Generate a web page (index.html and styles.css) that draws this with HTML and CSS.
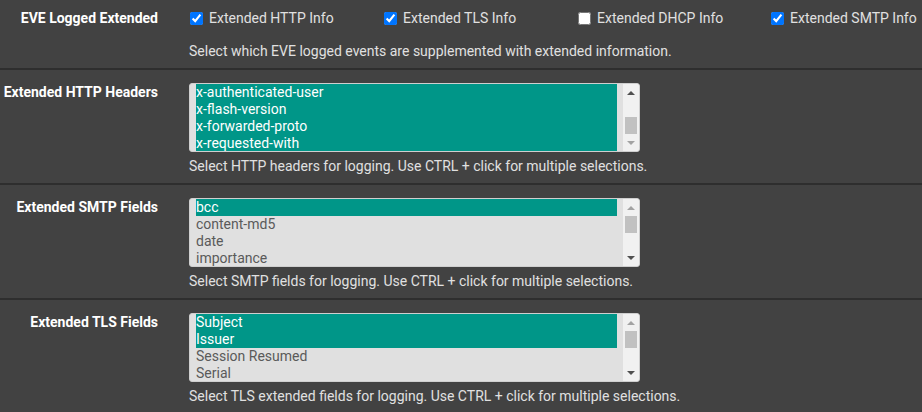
FILE: index.html
```html
<!DOCTYPE html>
<html lang="en">
<head>
    <meta charset="UTF-8">
    <meta name="viewport" content="width=device-width, initial-scale=1.0">
    <title>EVE Logging</title>
    <link rel="stylesheet" href="styles.css">
</head>
<body>
    <div class="panel">
        <div class="row row-checks">
            <div class="label">EVE Logged Extended</div>
            <div class="field">
                <div class="checks">
                    <label class="check"><input type="checkbox" checked> Extended HTTP Info</label>
                    <label class="check"><input type="checkbox" checked> Extended TLS Info</label>
                    <label class="check"><input type="checkbox"> Extended DHCP Info</label>
                    <label class="check"><input type="checkbox" checked> Extended SMTP Info</label>
                </div>
                <p class="help help-checks">Select which EVE logged events are supplemented with extended information.</p>
            </div>
        </div>

        <div class="row">
            <div class="label">Extended HTTP Headers</div>
            <div class="field">
                <div class="listbox">
                    <ul class="options">
                        <li class="selected">x-authenticated-user</li>
                        <li class="selected">x-flash-version</li>
                        <li class="selected">x-forwarded-proto</li>
                        <li class="selected">x-requested-with</li>
                    </ul>
                    <div class="scrollbar at-bottom">
                        <span class="arrow up"></span>
                        <div class="track"><span class="thumb"></span></div>
                        <span class="arrow down"></span>
                    </div>
                </div>
                <p class="help">Select HTTP headers for logging. Use CTRL + click for multiple selections.</p>
            </div>
        </div>

        <div class="row">
            <div class="label">Extended SMTP Fields</div>
            <div class="field">
                <div class="listbox">
                    <ul class="options">
                        <li class="selected">bcc</li>
                        <li>content-md5</li>
                        <li>date</li>
                        <li>importance</li>
                    </ul>
                    <div class="scrollbar at-top">
                        <span class="arrow up"></span>
                        <div class="track"><span class="thumb"></span></div>
                        <span class="arrow down"></span>
                    </div>
                </div>
                <p class="help">Select SMTP fields for logging. Use CTRL + click for multiple selections.</p>
            </div>
        </div>

        <div class="row">
            <div class="label">Extended TLS Fields</div>
            <div class="field">
                <div class="listbox">
                    <ul class="options">
                        <li class="selected">Subject</li>
                        <li class="selected">Issuer</li>
                        <li>Session Resumed</li>
                        <li>Serial</li>
                    </ul>
                    <div class="scrollbar at-top">
                        <span class="arrow up"></span>
                        <div class="track"><span class="thumb"></span></div>
                        <span class="arrow down"></span>
                    </div>
                </div>
                <p class="help">Select TLS extended fields for logging. Use CTRL + click for multiple selections.</p>
            </div>
        </div>
    </div>
</body>
</html>
```

FILE: styles.css
```css
:root {
    --bg: #424242;
    --divider: #2e2e2e;
    --text: #e0e0e0;
    --white: #ffffff;
    --teal: #009688;
    --list-bg: #e0e0e0;
    --list-text: #5a5a5a;
}

* {
    margin: 0;
    padding: 0;
    box-sizing: border-box;
}

body {
    background: var(--bg);
    color: var(--text);
    font-family: Roboto, "Liberation Sans", sans-serif;
    font-size: 14px;
    line-height: 17px;
}

.row {
    display: flex;
    padding: 13px 0 8px;
    border-bottom: 2px solid var(--divider);
}

.row:last-child {
    border-bottom: none;
}

.row-checks {
    padding: 8px 0 8px;
}

.label {
    width: 158px;
    flex-shrink: 0;
    text-align: right;
    font-weight: 700;
    color: var(--white);
    padding-top: 1px;
}

.row-checks .label {
    padding-top: 2px;
}

.field {
    margin-left: 31px;
}

.checks {
    display: grid;
    grid-template-columns: 194px 194px 193px auto;
    height: 20px;
    align-items: center;
}

.check {
    display: flex;
    align-items: center;
    white-space: nowrap;
}

.check input {
    width: 13px;
    height: 13px;
    margin: 0 6px 0 1px;
}

.help {
    margin-top: 6px;
}

.help-checks {
    margin-top: 15px;
}

.listbox {
    display: flex;
    width: 451px;
    height: 69px;
    background: var(--list-bg);
    border: 1px solid #cfcfcf;
    border-radius: 3px;
    padding-left: 6px;
    overflow: hidden;
}

.options {
    list-style: none;
    flex: 1;
    margin-right: 6px;
    color: var(--list-text);
}

.options li {
    height: 17px;
    line-height: 17px;
    white-space: nowrap;
}

.options li.selected {
    background: var(--teal);
    color: var(--white);
}

.scrollbar {
    width: 16px;
    flex-shrink: 0;
    background: #f1f1f1;
    display: flex;
    flex-direction: column;
}

.arrow {
    height: 17px;
    display: flex;
    align-items: center;
    justify-content: center;
}

.arrow::before {
    content: "";
    border-left: 4px solid transparent;
    border-right: 4px solid transparent;
}

.arrow.up::before {
    border-bottom: 4px solid #505050;
}

.arrow.down::before {
    border-top: 4px solid #505050;
}

.at-top .arrow.up::before {
    border-bottom-color: #a3a3a3;
}

.at-bottom .arrow.down::before {
    border-top-color: #a3a3a3;
}

.track {
    flex: 1;
    display: flex;
    flex-direction: column;
    padding: 0 2px;
}

.at-bottom .track {
    justify-content: flex-end;
}

.thumb {
    height: 17px;
    background: #c1c1c1;
}
```
